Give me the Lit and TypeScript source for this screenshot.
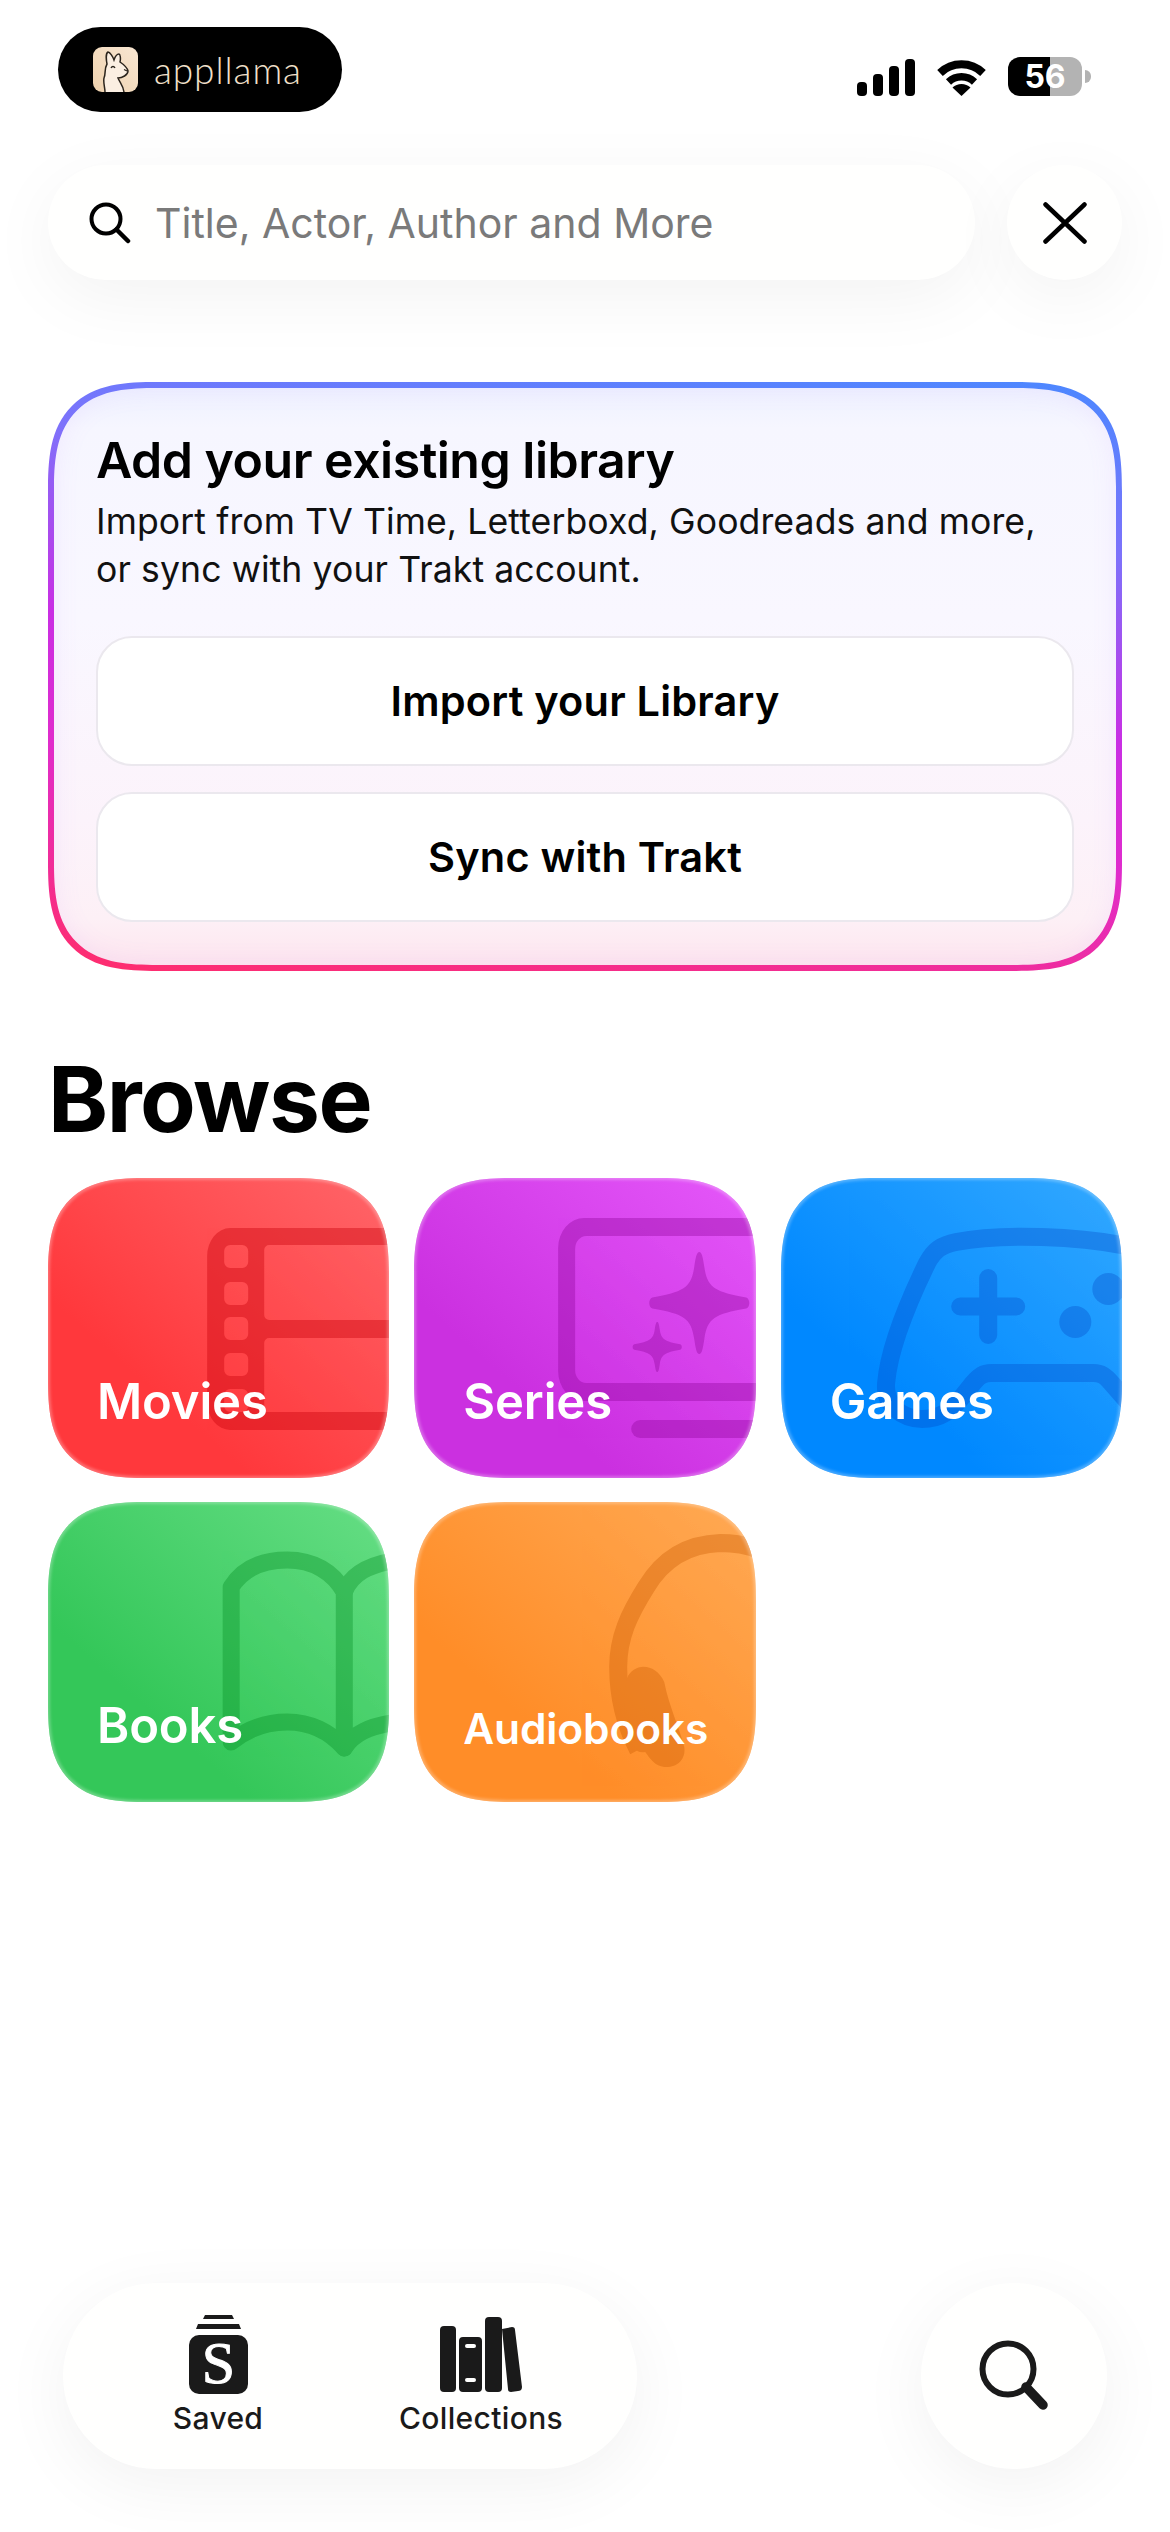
import { LitElement, html, css, svg } from "lit";
import { customElement } from "lit/decorators.js";

const star = (cx: number, cy: number, rx: number, ry: number) => {
  const k = 0.22;
  const t = 0.05;
  return `M${cx} ${cy - ry}
    C${cx + rx * t} ${cy - ry} ${cx + rx * t * 1.4} ${cy - ry * 0.9} ${cx + rx * 0.1} ${cy - ry * 0.7}
    C${cx + rx * 0.16} ${cy - ry * 0.3} ${cx + rx * 0.3} ${cy - ry * k} ${cx + rx * 0.92} ${cy - ry * 0.11}
    C${cx + rx} ${cy - ry * 0.08} ${cx + rx} ${cy + ry * 0.08} ${cx + rx * 0.92} ${cy + ry * 0.11}
    C${cx + rx * 0.3} ${cy + ry * k} ${cx + rx * 0.16} ${cy + ry * 0.3} ${cx + rx * 0.1} ${cy + ry * 0.7}
    C${cx + rx * t * 1.4} ${cy + ry * 0.9} ${cx + rx * t} ${cy + ry} ${cx} ${cy + ry}
    C${cx - rx * t} ${cy + ry} ${cx - rx * t * 1.4} ${cy + ry * 0.9} ${cx - rx * 0.1} ${cy + ry * 0.7}
    C${cx - rx * 0.16} ${cy + ry * 0.3} ${cx - rx * 0.3} ${cy + ry * k} ${cx - rx * 0.92} ${cy + ry * 0.11}
    C${cx - rx} ${cy + ry * 0.08} ${cx - rx} ${cy - ry * 0.08} ${cx - rx * 0.92} ${cy - ry * 0.11}
    C${cx - rx * 0.3} ${cy - ry * k} ${cx - rx * 0.16} ${cy - ry * 0.3} ${cx - rx * 0.1} ${cy - ry * 0.7}
    C${cx - rx * t * 1.4} ${cy - ry * 0.9} ${cx - rx * t} ${cy - ry} ${cx} ${cy - ry}Z`;
};

const filmHoles = [67, 104, 139, 175, 211]
  .map((y) => `M182 ${y}h12a6 6 0 0 1 6 6v11a6 6 0 0 1-6 6h-12a6 6 0 0 1-6-6v-11a6 6 0 0 1 6-6z`)
  .join("");

const art = {
  movies: svg`<path fill-rule="evenodd" d="M182 50H360V252H182a23 28 0 0 1-23-28V78a23 28 0 0 1 23-28z
    M221 67H345V142H221a5 5 0 0 1-5-5V72a5 5 0 0 1 5-5z
    M221 160H345V234H216V165a5 5 0 0 1 5-5z ${filmHoles}"/>`,
  series: svg`
    <path fill-rule="evenodd" d="M170 40H360V223H170a26 30 0 0 1-26-30V70a26 30 0 0 1 26-30z
      M172 58H345V205H172a11 13 0 0 1-11-13V71a11 13 0 0 1 11-13z"/>
    <rect x="217" y="242" width="160" height="18" rx="9"/>
    <path d="${star(285, 125, 51, 51)}"/>
    <path d="${star(243, 169, 25, 25)}"/>`,
  games: svg`
    <g fill="none" stroke="currentColor" stroke-width="18" stroke-linecap="round">
      <path d="M350 69C300 58 220 55 175 64C160 67 153 72 146 85C128 122 108 170 105 205C103 228 122 241 141 241C160 241 170 232 180 220L192 205C198 198 202 195 210 195H312C320 195 324 198 330 205L352 230"/>
      <path d="M179 128.500H235M207 100V157"/>
    </g>
    <circle cx="294" cy="144" r="16"/>
    <circle cx="327" cy="111" r="16"/>`,
  books: svg`
    <g fill="none" stroke="currentColor" stroke-width="17" stroke-linecap="round" stroke-linejoin="round">
      <path d="M183 238V85C195 66 215 58 239 58C265 58 285 70 296 90V246"/>
      <path d="M296 90C303 72 320 62 350 58"/>
      <path d="M183 240C200 226 218 220 239 220C262 220 282 230 296 246C305 232 320 224 350 220"/>
    </g>`,
  audio: svg`
    <path fill="none" stroke="currentColor" stroke-width="18" d="M345 48C335 44 320 41 306 41C275 42 250 55 232 85C215 112 204 135 204 165C204 195 212 225 224 248"/>
    <path d="M213 176C219 161 241 160 250 180C255 205 265 225 270 245C272 258 262 266 250 265C241 264 236 257 231 250C222 252 219 245 216 235C210 215 208 190 213 176Z"/>`,
};

const tiles = [
  { name: "Movies", cls: "movies", icon: art.movies },
  { name: "Series", cls: "series", icon: art.series },
  { name: "Games", cls: "games", icon: art.games },
  { name: "Books", cls: "books", icon: art.books },
  { name: "Audiobooks", cls: "audio", icon: art.audio },
];

@customElement("app-root")
export class AppRoot extends LitElement {
  static styles = css`
    :host {
      display: block;
      width: 1170px;
      height: 2532px;
      background: #fff;
      font-family: Inter, "Liberation Sans", sans-serif;
      color: #000;
    }
    .page {
      height: 2532px;
      display: flex;
      flex-direction: column;
      box-sizing: border-box;
      padding: 27px 48px 63px;
    }
    .status {
      display: flex;
      justify-content: space-between;
      align-items: flex-start;
      padding: 0 31px 0 10px;
    }
    .logo {
      width: 284px;
      height: 85px;
      border-radius: 43px;
      background: #000;
      display: flex;
      align-items: center;
      gap: 16px;
      padding-left: 35px;
      box-sizing: border-box;
    }
    .logo svg { display: block; }
    .logo span {
      font-family: Lato, sans-serif;
      font-weight: 300;
      font-size: 37px;
      line-height: 45px;
      color: #f2e0cb;
      letter-spacing: 0.9px;
    }
    .indicators {
      display: flex;
      align-items: flex-end;
      height: 39px;
      margin-top: 30px;
    }
    .indicators svg { display: block; }
    .wifi { margin-left: 22px; }
    .battery {
      margin-left: 22px;
      width: 74px;
      height: 39px;
      border-radius: 12px;
      background: linear-gradient(to right, #000 57%, #b3b3b3 57%);
      color: #fff;
      font: 700 32px/39px Inter, sans-serif;
      text-align: center;
    }
    .nub {
      width: 6px;
      height: 13px;
      margin: 0 0 13px 3px;
      border-radius: 0 7px 7px 0;
      background: #b3b3b3;
    }
    .search-row {
      display: flex;
      gap: 32px;
      margin-top: 53px;
    }
    .field, .close {
      background: #fffffe;
      height: 115px;
      box-shadow: 0 18px 70px rgba(0, 0, 0, 0.05);
      display: flex;
      align-items: center;
    }
    .field {
      flex: 1;
      border-radius: 58px;
      padding-left: 41px;
      gap: 24px;
      font-size: 41px;
      color: #7a7a7a;
    }
    .close {
      width: 115px;
      border-radius: 50%;
      justify-content: center;
    }
    .card {
      margin-top: 102px;
      height: 589px;
      box-sizing: border-box;
      border: 6px solid transparent;
      border-radius: 82px;
      padding: 43px 42px 0;
      box-shadow: inset 0 0 26px rgba(190, 120, 255, 0.1);
      background:
        linear-gradient(to bottom, #eef1ff 0%, #f6f6ff 7%, #f9f7ff 40%, #fcf3fb 75%, #fdf0f6 92%, #fde5ee 100%) padding-box,
        linear-gradient(187deg, #4b88ff 0%, #7d72fb 24%, #c92fe4 50%, #e02ccc 68%, #ff2d6b 100%) border-box;
    }
    h2 {
      margin: 0;
      font-size: 50px;
      line-height: 58px;
      font-weight: 600;
      letter-spacing: -0.5px;
    }
    p {
      margin: 8.500px 0 0;
      font-size: 35.600px;
      line-height: 48px;
      font-weight: 400;
      letter-spacing: 0.1px;
      color: #111;
    }
    .actions {
      display: flex;
      flex-direction: column;
      gap: 26px;
      margin-top: 42px;
    }
    .btn {
      height: 130px;
      box-sizing: border-box;
      border-radius: 36px;
      background: #fff;
      border: 2px solid #ebe8ee;
      display: flex;
      align-items: center;
      justify-content: center;
      font-size: 41.500px;
      font-weight: 600;
      letter-spacing: 0.2px;
    }
    h1 {
      margin: 78px 0 0;
      font-size: 91px;
      line-height: 100px;
      font-weight: 700;
      letter-spacing: -1.500px;
    }
    .grid {
      display: grid;
      grid-template-columns: repeat(3, 1fr);
      grid-auto-rows: 300px;
      gap: 24px 25px;
      margin-top: 29px;
    }
    .tile {
      position: relative;
      overflow: hidden;
      border-radius: 74px;
      display: flex;
      align-items: flex-end;
      padding: 0 0 46px 49px;
      box-sizing: border-box;
      background: linear-gradient(to top right, var(--a) 30%, var(--b) 100%);
      color: #fff;
      font-size: 49px;
      line-height: 60px;
      font-weight: 600;
      letter-spacing: -0.15px;
    }
    @supports (corner-shape: squircle) {
      .tile {
        border-radius: 100px;
        corner-shape: superellipse(1.5);
      }
      .card {
        border-radius: 110px;
        corner-shape: superellipse(1.5);
      }
    }
    .tile::after {
      content: "";
      position: absolute;
      inset: 0;
      border-radius: inherit;
      corner-shape: inherit;
      box-shadow: inset 0 0 3px 2px rgba(255, 255, 255, 0.28);
      pointer-events: none;
    }
    .tile svg {
      position: absolute;
      inset: 0;
      width: 100%;
      height: 100%;
      color: var(--c);
      fill: currentColor;
      opacity: var(--o);
    }
    .tile span { position: relative; }
    .tile.audio { font-size: 42.500px; line-height: 52px; padding-bottom: 47px; }
    .movies { --a: #ff383c; --b: #ff6569; --c: #c8000a; --o: 0.4; }
    .series { --a: #cb30e0; --b: #e558fa; --c: #8a0095; --o: 0.35; }
    .games { --a: #0088ff; --b: #33a9ff; --c: #0040c0; --o: 0.3; }
    .books { --a: #34c759; --b: #66de85; --c: #008a20; --o: 0.35; }
    .audio { --a: #ff8d28; --b: #ffaa55; --c: #c85a00; --o: 0.35; }
    .bottom {
      margin-top: auto;
      display: flex;
      justify-content: space-between;
      padding: 0 15px;
    }
    .nav, .fab {
      height: 186px;
      background: #fffffe;
      box-shadow: 0 16px 70px rgba(0, 0, 0, 0.055);
    }
    .nav {
      width: 574px;
      border-radius: 93px;
      display: flex;
      box-sizing: border-box;
      padding-left: 112px;
      gap: 177px;
    }
    .item {
      display: flex;
      flex-direction: column;
      align-items: center;
      width: 86px;
      padding-top: 32px;
      font-size: 30px;
      line-height: 36px;
      font-weight: 450;
      letter-spacing: 0.35px;
      color: #1a1a1a;
      white-space: nowrap;
    }
    .item svg { display: block; flex: none; }
    .item span { margin-top: 1px; }
    .fab {
      width: 186px;
      border-radius: 50%;
      display: flex;
      align-items: center;
      justify-content: center;
    }
    .s-glyph {
      font-family: "Liberation Serif", serif;
      font-weight: 400;
      font-size: 60px;
      fill: #fff;
      stroke: #fff;
      stroke-width: 1;
    }
  `;

  render() {
    return html`
      <div class="page">
        <div class="status">
          <div class="logo">
            <svg width="45" height="45" viewBox="0 0 45 45">
              <defs>
                <linearGradient id="lg" x1="1" y1="0" x2="0" y2="1">
                  <stop offset="0" stop-color="#f8e6d2" />
                  <stop offset="1" stop-color="#efd2ae" />
                </linearGradient>
              </defs>
              <rect width="45" height="45" rx="9" fill="url(#lg)" />
              <path
                d="M31 45C30 38 27 36 25 31C29 31 35 28 35 24C34 20 30 17 27 15C28 11 27 7 26 7C24 7 22 10 21 13C20 10 17 5 15 5C13 6 13 12 14 17C11 22 13 27 11 31C10 35 12 41 12 45"
                fill="#fbefe2"
                stroke="#2b241c"
                stroke-width="1.5"
              />
              <path d="M18 21C19 19 21 19 22 21M31 22.500L34 24" fill="none" stroke="#2b241c" stroke-width="1.300" />
            </svg>
            <span>appllama</span>
          </div>
          <div class="indicators">
            <svg width="58" height="37" viewBox="0 0 58 37">
              <rect x="0" y="23" width="10" height="14" rx="4" />
              <rect x="16" y="15" width="10" height="22" rx="4" />
              <rect x="32" y="7" width="10" height="30" rx="4" />
              <rect x="48" y="0" width="10" height="37" rx="4" />
            </svg>
            <svg class="wifi" width="49" height="37" viewBox="0 0 49 37">
              <path d="M3 14A31 31 0 0 1 46 14" fill="none" stroke="#000" stroke-width="8" />
              <path d="M11.500 23A19 19 0 0 1 37.500 23" fill="none" stroke="#000" stroke-width="7.500" />
              <path d="M24.500 37L15.500 28.500A13 13 0 0 1 33.500 28.500Z" />
            </svg>
            <div class="battery">56</div>
            <div class="nub"></div>
          </div>
        </div>

        <div class="search-row">
          <div class="field">
            <svg width="42" height="42" viewBox="0 0 42 42" fill="none" stroke="#000">
              <circle cx="17" cy="17" r="14.500" stroke-width="4" />
              <path d="M27.500 27.500L39 39" stroke-width="4.500" stroke-linecap="round" />
            </svg>
            <span>Title, Actor, Author and More</span>
          </div>
          <div class="close">
            <svg width="44" height="42" viewBox="0 0 44 42" fill="none" stroke="#000" stroke-width="4.500" stroke-linecap="round">
              <path d="M2.500 2.500L41.500 39.500M41.500 2.500L2.500 39.500" />
            </svg>
          </div>
        </div>

        <section class="card">
          <h2>Add your existing library</h2>
          <p>Import from TV Time, Letterboxd, Goodreads and more,<br />or sync with your Trakt account.</p>
          <div class="actions">
            <div class="btn">Import your Library</div>
            <div class="btn">Sync with Trakt</div>
          </div>
        </section>

        <h1>Browse</h1>
        <div class="grid">
          ${tiles.map(
            (t) => html`
              <div class="tile ${t.cls}">
                <svg viewBox="0 0 341 300" preserveAspectRatio="none">${t.icon}</svg>
                <span>${t.name}</span>
              </div>
            `
          )}
        </div>

        <div class="bottom">
          <div class="nav">
            <div class="item">
              <svg width="59" height="84" viewBox="0 0 59 84" fill="#1a1a1a">
                <path d="M16 0H43L45 4H14Z" />
                <path d="M9 9H50L52 14H7Z" />
                <rect x="0" y="20" width="59" height="59" rx="10" />
                <text class="s-glyph" x="29.500" y="68" text-anchor="middle">S</text>
              </svg>
              <span>Saved</span>
            </div>
            <div class="item">
              <svg width="82" height="84" viewBox="0 -2 82 84" fill="#1a1a1a">
                <rect x="0" y="9" width="16" height="66" rx="4" />
                <path fill-rule="evenodd" d="M23 20H38a4 4 0 0 1 4 4V71a4 4 0 0 1-4 4H23a4 4 0 0 1-4-4V24a4 4 0 0 1 4-4zM27 27a2 2 0 0 0 0 4h7a2 2 0 0 0 0-4zM27 61a2 2 0 0 0 0 4h7a2 2 0 0 0 0-4z" />
                <rect x="45" y="0" width="17" height="75" rx="4" />
                <path d="M62 12L72 10C74 10 75 11 75 13L82 70C82 73 80 74 78 74L71 75C69 75 68 74 68 72Z" />
              </svg>
              <span>Collections</span>
            </div>
          </div>
          <div class="fab">
            <svg width="70" height="72" viewBox="0 0 70 72" fill="none" stroke="#1a1a1a">
              <circle cx="29" cy="29" r="25.500" stroke-width="6" />
              <path d="M47 47L64 65" stroke-width="9.500" stroke-linecap="round" />
            </svg>
          </div>
        </div>
      </div>
    `;
  }
}
